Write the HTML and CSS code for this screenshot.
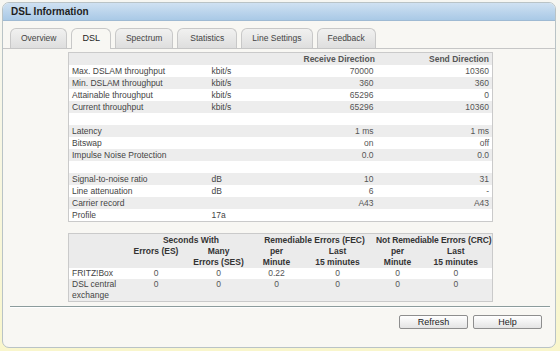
FILE: index.html
```html
<!DOCTYPE html>
<html>
<head>
<meta charset="utf-8">
<link rel="stylesheet" href="styles.css">
</head>
<body>
<div class="window">
  <div class="titlebar">DSL Information</div>
  <div class="tabbar">
    <div class="tab">Overview</div>
    <div class="tab active">DSL</div>
    <div class="tab">Spectrum</div>
    <div class="tab wide">Statistics</div>
    <div class="tab">Line Settings</div>
    <div class="tab">Feedback</div>
  </div>
  <div class="content">
    <table class="grid main">
      <colgroup><col class="c-label"><col class="c-unit"><col class="c-rx"><col class="c-tx"></colgroup>
      <thead>
        <tr><th></th><th></th><th class="num">Receive Direction</th><th class="num">Send Direction</th></tr>
      </thead>
      <tbody>
        <tr><td>Max. DSLAM throughput</td><td>kbit/s</td><td class="num">70000</td><td class="num">10360</td></tr>
        <tr><td>Min. DSLAM throughput</td><td>kbit/s</td><td class="num">360</td><td class="num">360</td></tr>
        <tr><td>Attainable throughput</td><td>kbit/s</td><td class="num">65296</td><td class="num">0</td></tr>
        <tr><td>Current throughput</td><td>kbit/s</td><td class="num">65296</td><td class="num">10360</td></tr>
        <tr class="blank"><td></td><td></td><td></td><td></td></tr>
        <tr><td>Latency</td><td></td><td class="num">1 ms</td><td class="num">1 ms</td></tr>
        <tr><td>Bitswap</td><td></td><td class="num">on</td><td class="num">off</td></tr>
        <tr><td>Impulse Noise Protection</td><td></td><td class="num">0.0</td><td class="num">0.0</td></tr>
        <tr class="blank"><td></td><td></td><td></td><td></td></tr>
        <tr><td>Signal-to-noise ratio</td><td>dB</td><td class="num">10</td><td class="num">31</td></tr>
        <tr><td>Line attenuation</td><td>dB</td><td class="num">6</td><td class="num">-</td></tr>
        <tr><td>Carrier record</td><td></td><td class="num">A43</td><td class="num">A43</td></tr>
        <tr><td>Profile</td><td>17a</td><td></td><td></td></tr>
      </tbody>
    </table>

    <table class="grid errors">
      <colgroup><col class="e-label"><col class="e-es"><col class="e-ses"><col class="e-fm"><col class="e-f15"><col class="e-cm"><col class="e-c15"></colgroup>
      <thead>
        <tr class="top"><th></th><th colspan="2">Seconds With</th><th colspan="2">Remediable Errors (FEC)</th><th colspan="2" class="tight">Not Remediable Errors (CRC)</th></tr>
        <tr class="sub"><th></th><th>Errors (ES)</th><th>Many<br>Errors (SES)</th><th>per<br>Minute</th><th>Last<br>15 minutes</th><th>per<br>Minute</th><th>Last<br>15 minutes</th></tr>
      </thead>
      <tbody>
        <tr><td class="lbl">FRITZ!Box</td><td>0</td><td>0</td><td>0.22</td><td>0</td><td>0</td><td>0</td></tr>
        <tr><td class="lbl">DSL central exchange</td><td>0</td><td>0</td><td>0</td><td>0</td><td>0</td><td>0</td></tr>
      </tbody>
    </table>
  </div>
  <div class="footer">
    <button class="btn">Refresh</button>
    <button class="btn">Help</button>
  </div>
</div>
</body>
</html>
```

FILE: styles.css
```css
html, body {
  margin: 0;
  padding: 0;
}
body {
  width: 560px;
  height: 351px;
  background: linear-gradient(#f6f6f2, #f9f6cc);
  font-family: "Liberation Sans", Arial, sans-serif;
  font-size: 8.5px;
  color: #3a3a3a;
}
.window {
  box-sizing: border-box;
  margin: 2px 0 0 2px;
  width: 554px;
  height: 346px;
  border: 1px solid #b9c3c6;
  border-radius: 7px;
  background: #f8f7f3;
  overflow: hidden;
  display: flex;
  flex-direction: column;
}
.titlebar {
  height: 17px;
  line-height: 17px;
  padding-left: 8px;
  background: linear-gradient(#cfe1f2, #a9c9e6);
  border-bottom: 1px solid #9fbad3;
  font-weight: bold;
  font-size: 10px;
  color: #1e1e1e;
}
.tabbar {
  margin-top: 7px;
  padding-left: 7px;
  display: flex;
  gap: 4px;
  border-bottom: 1px solid #c6c6c6;
  height: 20px;
}
.tab {
  box-sizing: border-box;
  height: 20px;
  padding: 0 10px;
  line-height: 19px;
  border: 1px solid #c8c8c8;
  border-bottom: none;
  border-radius: 6px 6px 0 0;
  background: linear-gradient(#f1f1f0, #dedede);
  color: #444;
  font-size: 8.5px;
}
.tab.wide {
  padding: 0 12px;
}
.tab.active {
  height: 21px;
  background: #f8f7f3;
  color: #1e1e1e;
  font-size: 9px;
}
.content {
  padding: 3px 0 0 65px;
}
.grid {
  border-collapse: collapse;
  table-layout: fixed;
  width: 424px;
  border: 1px solid #cacaca;
  background: #ffffff;
}
.grid th, .grid td {
  padding: 0 3px;
  white-space: nowrap;
  overflow: hidden;
}
.grid th {
  font-weight: bold;
  color: #333;
  text-align: center;
}
.grid thead tr {
  background: #ebebeb;
}
.grid tbody tr:nth-child(even) {
  background: #ededed;
}
.main th, .main td {
  height: 12px;
  line-height: 12px;
}
.main td {
  color: #444;
}
.main .num {
  text-align: right;
  color: #555;
}
.c-label { width: 140px; }
.c-unit { width: 92px; }
.c-rx { width: 76px; }
.c-tx { width: 116px; }

.errors {
  margin-top: 11px;
}
.errors th, .errors td {
  line-height: 11px;
  text-align: center;
  vertical-align: top;
}
.errors th {
  padding: 0;
}
.errors .top th {
  line-height: 12px;
}
.errors th.tight {
  letter-spacing: -0.12px;
}
.errors td {
  color: #555;
}
.errors td.lbl {
  text-align: left;
  white-space: normal;
  color: #444;
}
.e-label { width: 60px; }
.e-es { width: 55px; }
.e-ses { width: 70px; }
.e-fm { width: 46px; }
.e-f15 { width: 76px; }
.e-cm { width: 44px; }
.e-c15 { width: 73px; }

.footer {
  margin: 4px 5px 0 7px;
  border-top: 1px solid #8c9c9c;
  box-shadow: inset 0 1px 0 #ffffff;
  display: flex;
  justify-content: flex-end;
  gap: 5px;
  padding: 8px 8px 0 0;
}
.btn {
  box-sizing: border-box;
  width: 69px;
  height: 14px;
  padding: 0;
  border: 1px solid #8e8e8e;
  border-radius: 2px;
  background: linear-gradient(#ffffff, #e4e4e4);
  font-family: "Liberation Sans", Arial, sans-serif;
  font-size: 9px;
  line-height: 12px;
  color: #222;
}
```
